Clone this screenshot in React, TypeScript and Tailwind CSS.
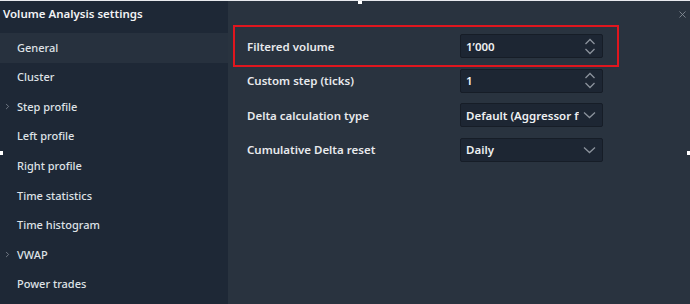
import { ChevronRight, X } from "lucide-react";

const menu = [
  { label: "General", active: true },
  { label: "Cluster" },
  { label: "Step profile", sub: true },
  { label: "Left profile" },
  { label: "Right profile" },
  { label: "Time statistics" },
  { label: "Time histogram" },
  { label: "VWAP", sub: true },
  { label: "Power trades" },
];

function Spinner() {
  return (
    <svg width="12" height="19" viewBox="0 0 12 19" fill="none" stroke="#8b929c" strokeWidth="1.3">
      <path d="M1.5 7 L6 2.5 L10.5 7" />
      <path d="M1.5 12 L6 16.5 L10.5 12" />
    </svg>
  );
}

function Caret() {
  return (
    <svg width="13" height="8" viewBox="0 0 13 8" fill="none" stroke="#8b929c" strokeWidth="1.3">
      <path d="M1 1.5 L6.5 6.5 L12 1.5" />
    </svg>
  );
}

function Field({ value, kind }: { value: string; kind: "spin" | "select" }) {
  return (
    <div className="flex h-[24px] w-[143px] items-center rounded-[2px] border border-[#161d27] bg-[#1d2633] pl-[5px] pr-[6px]">
      <span className="flex-1 overflow-hidden whitespace-nowrap text-[11.5px] font-semibold text-[#eef0f2]">
        {value}
      </span>
      <span className="ml-1 flex w-[13px] justify-center">{kind === "spin" ? <Spinner /> : <Caret />}</span>
    </div>
  );
}

export default function App() {
  const rows: { label: string; value: string; kind: "spin" | "select" }[] = [
    { label: "Filtered volume", value: "1’000", kind: "spin" },
    { label: "Custom step (ticks)", value: "1", kind: "spin" },
    { label: "Delta calculation type", value: "Default (Aggressor flag)", kind: "select" },
    { label: "Cumulative Delta reset", value: "Daily", kind: "select" },
  ];

  return (
    <div
      className="relative flex h-[304px] w-[690px] overflow-hidden border-t border-[#e8eaee] bg-[#29333f]"
      style={{ fontFamily: '"Noto Sans", "Open Sans", sans-serif' }}
    >
      <aside className="flex w-[228px] shrink-0 flex-col bg-[#1e2836]">
        <div className="h-[32px] pl-[3px] pt-[5px] text-[11.5px] font-semibold leading-[16px] text-[#f2f3f5]">
          Volume Analysis settings
        </div>
        {menu.map((item) => (
          <div
            key={item.label}
            className={`relative flex h-[29.6px] items-center pl-[17px] text-[11px] font-medium text-[#dfe2e6] ${
              item.active ? "bg-[#27313e]" : ""
            }`}
          >
            {item.sub ? (
              <ChevronRight className="absolute left-[3px] h-[9px] w-[9px] text-[#8b929c]" strokeWidth={2} />
            ) : null}
            {item.label}
          </div>
        ))}
      </aside>

      <main className="relative flex-1 pl-[19px] pt-[28px]">
        <X className="absolute right-[2px] top-[8px] h-[11px] w-[11px] text-[#8b929c]" strokeWidth={1.8} />
        {rows.map((row, i) => (
          <div key={row.label} className="relative flex h-[34.5px] w-[356px] items-center">
            {i === 0 ? (
              <div className="absolute -bottom-[3.5px] -left-[14px] -right-[16px] -top-[4px] border-2 border-[#e0161e]" />
            ) : null}
            <span className="w-[213px] text-[11.5px] font-semibold text-[#e8eaed]">{row.label}</span>
            <Field value={row.value} kind={row.kind} />
          </div>
        ))}
      </main>

      <div className="absolute left-[358px] top-[-1px] h-[4px] w-[4px] bg-white" />
      <div className="absolute left-0 top-[150px] h-[4px] w-[3px] bg-white" />
      <div className="absolute right-0 top-[150px] h-[4px] w-[3px] bg-white" />
    </div>
  );
}
